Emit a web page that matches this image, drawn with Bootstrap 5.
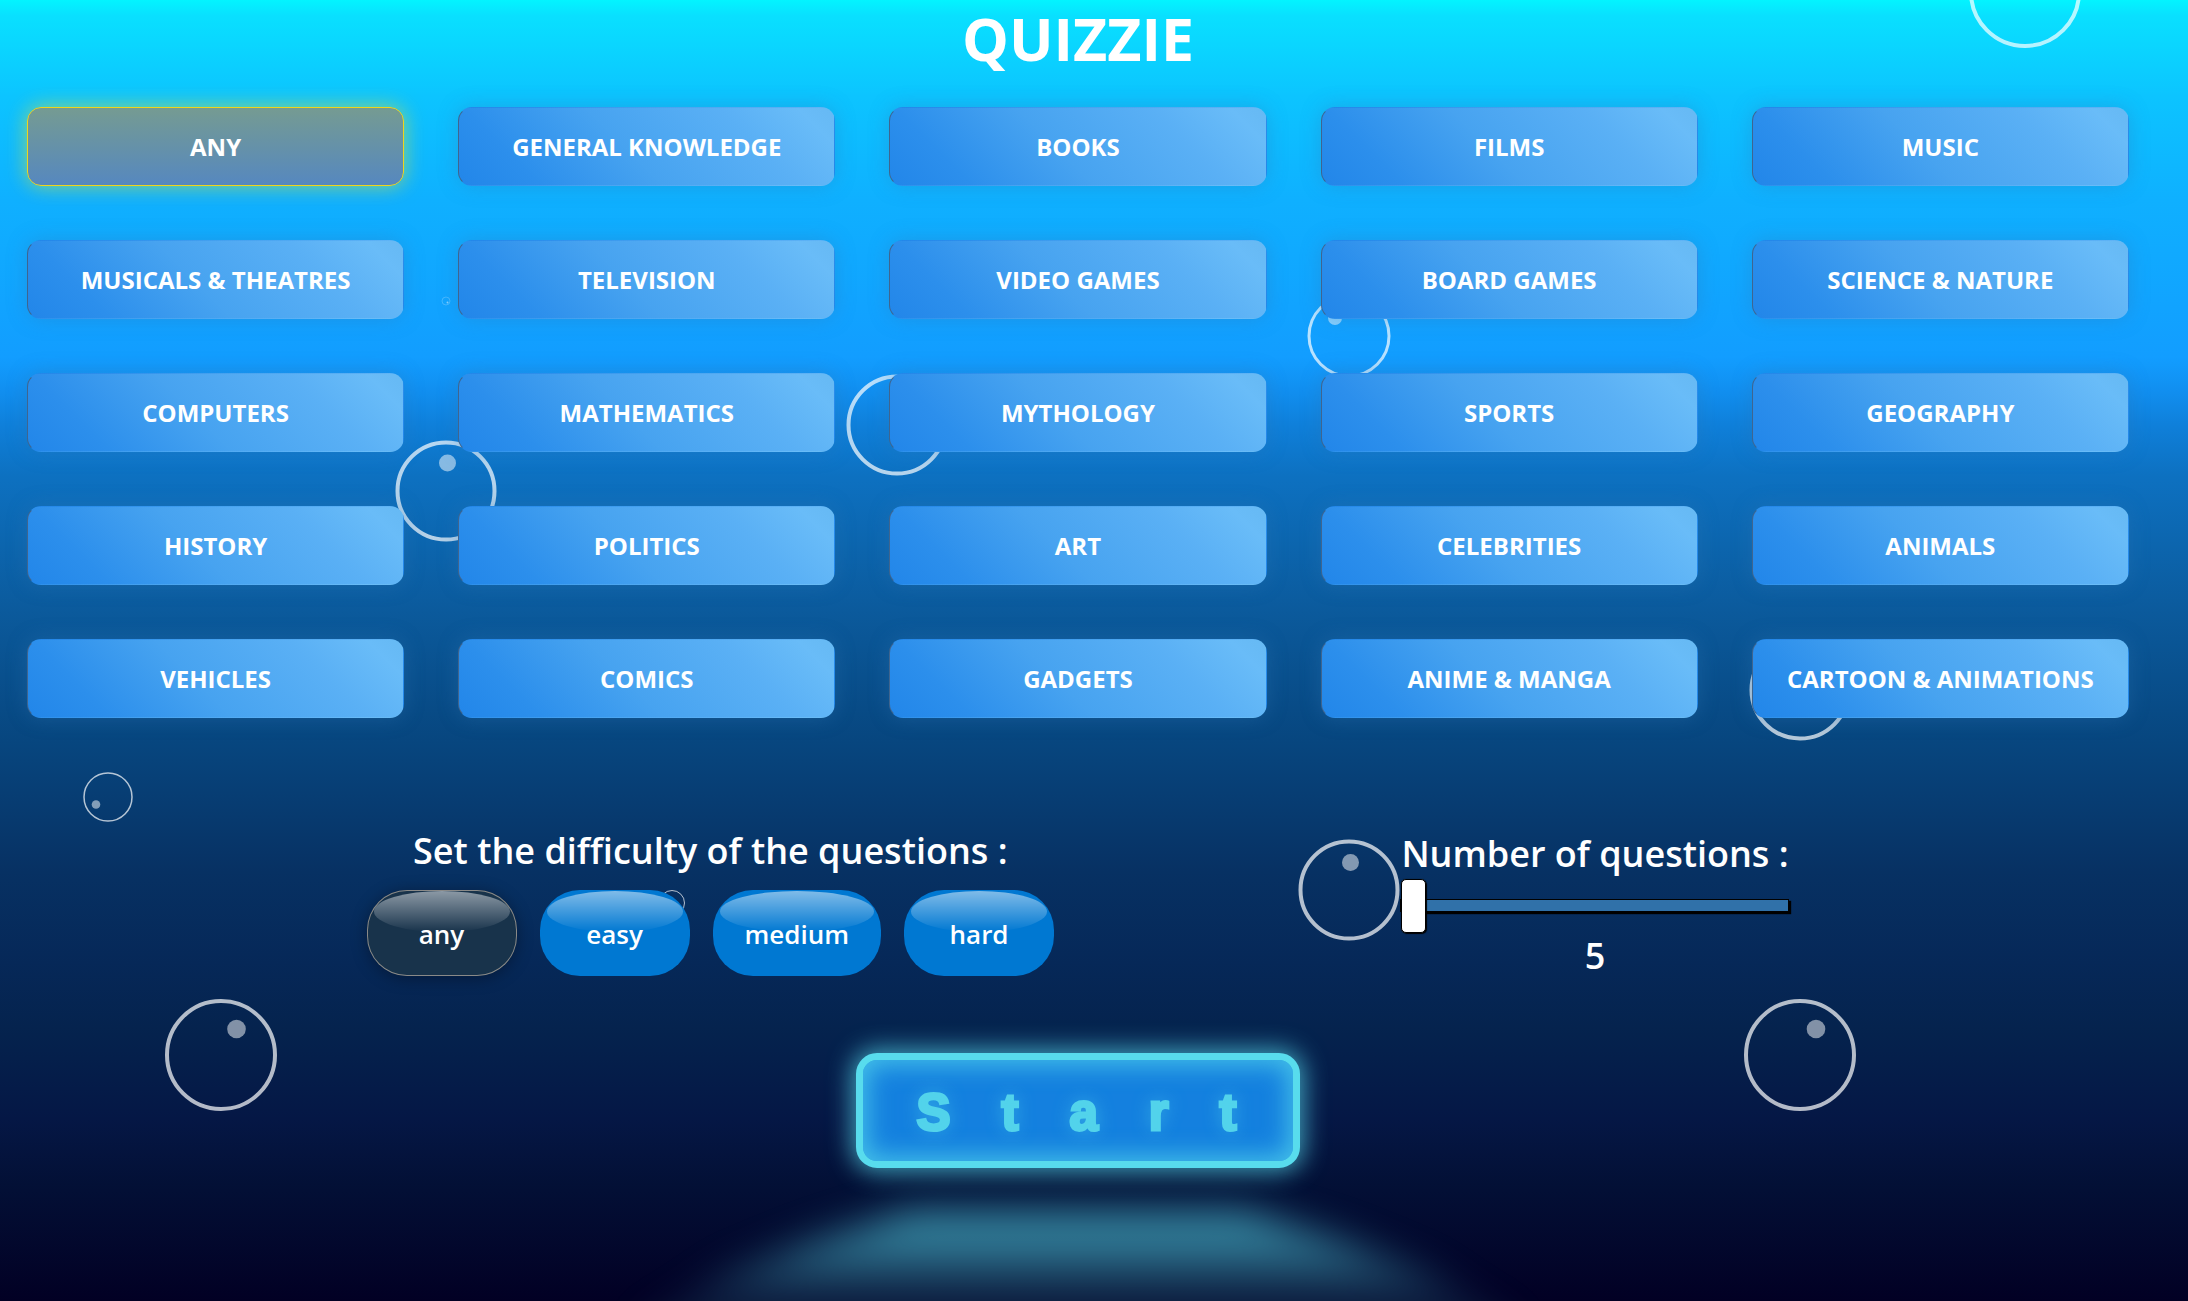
<!DOCTYPE html>
<html lang="en">
<head>
<meta charset="utf-8">
<meta name="viewport" content="width=device-width, initial-scale=1">
<title>Quizzie</title>
<link href="https://cdn.jsdelivr.net/npm/bootstrap@5.3.0/dist/css/bootstrap.min.css" rel="stylesheet">
<style>
  :root { --quiz-glow: #58dced; }
  body {
    font-family: "Open Sans", "Noto Sans", sans-serif;
    color: #fff;
    background: #00001f;
  }
  .ocean {
    min-height: 100vh;
    padding-right: 32px;
    background: linear-gradient(180deg,
      #03f4ff 0%, #09e0ff 1.2%, #0cc4ff 7.4%, #0fb0ff 15.4%, #129dff 27.5%,
      #118ff0 30%, #0f7fd9 32.8%, #0d71c1 36.5%, #0b5a9c 47%, #07467f 57%,
      #073163 67%, #062858 74%, #05234e 79%, #051745 86%, #031036 91%, #020024 100%);
  }
  .bubbles { z-index: 0; }
  .bubbles .ring { fill: none; stroke: #fff; stroke-opacity: .7; stroke-width: 4; }
  .bubbles .ring-mid { stroke-width: 3; }
  .bubbles .ring-small { stroke-width: 1.5; }
  .bubbles .ring-fine { stroke-width: 1; }
  .bubbles .ring-speck { stroke-width: .3; }
  .bubbles .shine { fill: #fff; fill-opacity: .5; }
  .quiz { z-index: 1; }
  .quiz-title { font-size: 59px; font-weight: 700; line-height: 76px; margin-bottom: 4px; }

  .topic-cell { padding: 27px; }
  .topic {
    width: 100%;
    height: 79px;
    font-size: 24px;
    font-weight: 700;
    color: #fff;
    border: 1px solid transparent;
    border-left-color: #3f658f;
    border-radius: 14px;
    background: linear-gradient(45deg, #2286e9 0%, #2c8fec 18%, #47a3f0 45%, #5ab0f5 75%, #69bcf8 92%, #66b9f3 100%);
    box-shadow: 0 0 20px rgba(50, 120, 180, .35);
  }
  .topic:hover { color: #fff; }
  .topic.active {
    color: #fff;
    border-color: #efd51b;
    background: linear-gradient(180deg, #759b92, #5688bf);
    box-shadow: 0 0 20px rgba(220, 225, 50, .65);
  }

  .settings { padding: 82px 17% 0; }
  .settings-label { font-size: 36px; font-weight: 600; line-height: 48px; }
  .level-set { gap: 23px; margin-top: 15px; }
  .level {
    min-width: 150px;
    height: 86px;
    padding: 2px 32px 0;
    font-size: 26px;
    font-weight: 600;
    color: #fff;
    border: 0;
    border-radius: 40px;
    background: #0078d2;
  }
  .level:hover { color: #fff; background: #0078d2; }
  .level::before {
    content: "";
    position: absolute;
    top: 1px;
    left: 7px;
    right: 7px;
    height: 41px;
    border-radius: 50%;
    background: linear-gradient(rgba(255, 255, 255, .5), rgba(255, 255, 255, 0));
  }
  .level.active {
    color: #fff;
    background: #18334b;
    box-shadow: inset 0 0 0 1px #8a8a88, 0 2px 16px rgba(0, 0, 0, .35);
  }

  .amount { width: 389px; padding-top: 3px; }
  .amount-range {
    -webkit-appearance: none;
    appearance: none;
    height: 54px;
    margin: 0;
    background: transparent;
  }
  .amount-range::-webkit-slider-runnable-track {
    height: 13px;
    border: 1px solid #010101;
    background: #3071a9;
    box-shadow: 2px 2px 1px #000;
  }
  .amount-range::-webkit-slider-thumb {
    -webkit-appearance: none;
    width: 25px;
    height: 54px;
    margin-top: -21px;
    border: 1px solid #000;
    border-radius: 5px;
    background: #fff;
    box-shadow: 1px 1px 1px #000, 0 0 1px #0d0d0d;
  }

  .start-area { padding-top: 73px; }
  .start {
    width: 444px;
    height: 115px;
    padding: 3px 0 0 48px;
    font-family: "Liberation Sans", Arial, sans-serif;
    font-size: 51px;
    font-weight: 900;
    line-height: 1;
    letter-spacing: 1em;
    white-space: nowrap;
    color: #52d3eb;
    -webkit-text-stroke: 3px #52d3eb;
    border: 7px solid var(--quiz-glow);
    border-radius: 21px;
    background: #1480df;
    box-shadow: 0 0 24px 4px rgba(88, 220, 237, .7), inset 0 0 24px 5px rgba(88, 220, 237, .7);
    text-shadow: 0 0 18px rgba(88, 220, 237, .6);
  }
  .start:hover { color: #52d3eb; background: #1480df; border-color: var(--quiz-glow); }
  .start-beam {
    top: 100%;
    left: 50%;
    width: 760px;
    height: 150px;
    margin-top: 43px;
    transform: translateX(-50%);
    filter: blur(19px);
    pointer-events: none;
  }
  .start-beam::before {
    content: "";
    position: absolute;
    inset: 0 -60px;
    clip-path: polygon(31% 0, 69% 0, 80% 20%, 90% 42%, 100% 75%, 100% 100%, 0 100%, 0 75%, 10% 42%, 20% 20%);
    background: linear-gradient(rgba(80, 200, 220, .76), rgba(80, 200, 220, .54) 25%, rgba(80, 200, 220, .16) 55%, rgba(80, 200, 220, .04) 100%);
  }
</style>
</head>
<body>
<div class="ocean position-relative overflow-hidden">
  <svg class="bubbles position-absolute top-0 start-0 w-100 h-100" viewBox="0 0 2188 1301" preserveAspectRatio="xMidYMin slice" aria-hidden="true">
    <circle class="ring" cx="2025" cy="-8" r="54"/>
    <circle class="ring ring-mid" cx="1349" cy="336" r="40"/><circle class="shine" cx="1335" cy="318" r="7"/>
    <circle class="ring" cx="897" cy="425" r="48.5"/>
    <circle class="ring" cx="446" cy="491" r="48.5"/><circle class="shine" cx="447.5" cy="463" r="8.5"/>
    <circle class="ring" cx="1800" cy="690" r="48.5"/>
    <circle class="ring ring-small" cx="108" cy="797" r="24"/><circle class="shine" cx="96" cy="804.5" r="4.3"/>
    <circle class="ring" cx="221" cy="1055" r="54"/><circle class="shine" cx="236.5" cy="1029" r="9.3"/>
    <circle class="ring" cx="1800" cy="1055" r="54"/><circle class="shine" cx="1816" cy="1029" r="9.3"/>
    <circle class="ring" cx="1349" cy="890" r="48.5"/><circle class="shine" cx="1350.5" cy="862.5" r="8.5"/>
    <circle class="ring ring-fine" cx="672" cy="903" r="12.5"/>
    <circle class="ring ring-speck" cx="446" cy="301" r="4"/><circle class="shine" cx="447.5" cy="302.5" r="1"/>
  </svg>

  <main class="quiz position-relative">
    <h1 class="quiz-title text-center">QUIZZIE</h1>

    <div class="row row-cols-5 g-0">
      <div class="col topic-cell"><button type="button" class="btn topic active" aria-pressed="true">ANY</button></div>
      <div class="col topic-cell"><button type="button" class="btn topic">GENERAL KNOWLEDGE</button></div>
      <div class="col topic-cell"><button type="button" class="btn topic">BOOKS</button></div>
      <div class="col topic-cell"><button type="button" class="btn topic">FILMS</button></div>
      <div class="col topic-cell"><button type="button" class="btn topic">MUSIC</button></div>
      <div class="col topic-cell"><button type="button" class="btn topic">MUSICALS &amp; THEATRES</button></div>
      <div class="col topic-cell"><button type="button" class="btn topic">TELEVISION</button></div>
      <div class="col topic-cell"><button type="button" class="btn topic">VIDEO GAMES</button></div>
      <div class="col topic-cell"><button type="button" class="btn topic">BOARD GAMES</button></div>
      <div class="col topic-cell"><button type="button" class="btn topic">SCIENCE &amp; NATURE</button></div>
      <div class="col topic-cell"><button type="button" class="btn topic">COMPUTERS</button></div>
      <div class="col topic-cell"><button type="button" class="btn topic">MATHEMATICS</button></div>
      <div class="col topic-cell"><button type="button" class="btn topic">MYTHOLOGY</button></div>
      <div class="col topic-cell"><button type="button" class="btn topic">SPORTS</button></div>
      <div class="col topic-cell"><button type="button" class="btn topic">GEOGRAPHY</button></div>
      <div class="col topic-cell"><button type="button" class="btn topic">HISTORY</button></div>
      <div class="col topic-cell"><button type="button" class="btn topic">POLITICS</button></div>
      <div class="col topic-cell"><button type="button" class="btn topic">ART</button></div>
      <div class="col topic-cell"><button type="button" class="btn topic">CELEBRITIES</button></div>
      <div class="col topic-cell"><button type="button" class="btn topic">ANIMALS</button></div>
      <div class="col topic-cell"><button type="button" class="btn topic">VEHICLES</button></div>
      <div class="col topic-cell"><button type="button" class="btn topic">COMICS</button></div>
      <div class="col topic-cell"><button type="button" class="btn topic">GADGETS</button></div>
      <div class="col topic-cell"><button type="button" class="btn topic">ANIME &amp; MANGA</button></div>
      <div class="col topic-cell"><button type="button" class="btn topic">CARTOON &amp; ANIMATIONS</button></div>
    </div>

    <section class="settings d-flex justify-content-between align-items-start">
      <div class="text-center" role="group" aria-labelledby="level-label">
        <div class="settings-label" id="level-label">Set the difficulty of the questions :</div>
        <div class="level-set d-flex justify-content-center">
          <button type="button" class="btn level position-relative active" aria-pressed="true">any</button>
          <button type="button" class="btn level position-relative">easy</button>
          <button type="button" class="btn level position-relative">medium</button>
          <button type="button" class="btn level position-relative">hard</button>
        </div>
      </div>
      <div class="amount text-center">
        <label class="settings-label d-block text-nowrap" for="amount">Number of questions :</label>
        <input type="range" class="amount-range d-block w-100" id="amount" min="5" max="50" value="5">
        <output class="settings-label d-block" for="amount">5</output>
      </div>
    </section>

    <div class="start-area d-flex justify-content-center">
      <div class="position-relative">
        <button type="button" class="btn start">Start</button>
        <div class="start-beam position-absolute"></div>
      </div>
    </div>
  </main>
</div>
<script src="https://cdn.jsdelivr.net/npm/bootstrap@5.3.0/dist/js/bootstrap.bundle.min.js"></script>
</body>
</html>
